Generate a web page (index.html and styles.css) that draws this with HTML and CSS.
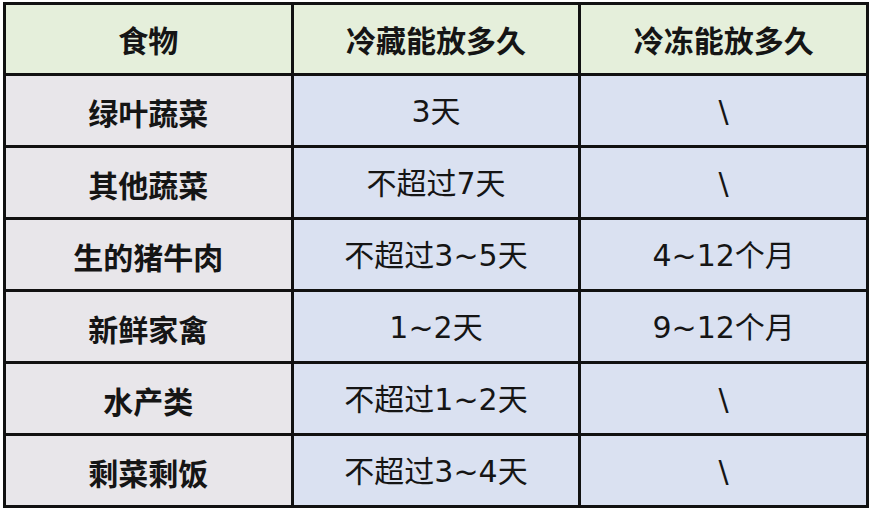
FILE: index.html
```html
<!DOCTYPE html>
<html lang="zh-CN">
<head>
<meta charset="utf-8">
<link rel="stylesheet" href="styles.css">
</head>
<body>
<table class="storage">
  <thead>
    <tr class="head-row">
      <th>食物</th>
      <th>冷藏能放多久</th>
      <th>冷冻能放多久</th>
    </tr>
  </thead>
  <tbody>
    <tr><th>绿叶蔬菜</th><td>3天</td><td>\</td></tr>
    <tr><th>其他蔬菜</th><td>不超过7天</td><td>\</td></tr>
    <tr><th>生的猪牛肉</th><td>不超过3~5天</td><td>4~12个月</td></tr>
    <tr><th>新鲜家禽</th><td>1~2天</td><td>9~12个月</td></tr>
    <tr><th>水产类</th><td>不超过1~2天</td><td>\</td></tr>
    <tr><th>剩菜剩饭</th><td>不超过3~4天</td><td>\</td></tr>
  </tbody>
</table>
</body>
</html>
```
FILE: styles.css
```css
html, body {
  margin: 0;
  padding: 0;
  background: #ffffff;
}

body {
  padding: 2px 0 0 3px;
  font-family: "Noto Sans CJK SC", "Noto Sans", sans-serif;
  color: #151515;
}

.storage {
  border-collapse: collapse;
  table-layout: fixed;
  width: 866px;
}

.storage th,
.storage td {
  border: 3px solid #111111;
  text-align: center;
  vertical-align: middle;
  font-size: 30px;
  line-height: 1;
  padding: 2px 0 0 0;
  height: 72px;
  box-sizing: border-box;
}

.storage td {
  font-family: "DejaVu Sans", "Noto Sans CJK SC", sans-serif;
  font-weight: 400;
  background: #dae1f1;
}

.storage tbody th {
  font-weight: 700;
  background: #e8e6ea;
}

.head-row th {
  font-weight: 700;
  background: #e5efdb;
  height: 71px;
  padding-top: 0;
}
```
